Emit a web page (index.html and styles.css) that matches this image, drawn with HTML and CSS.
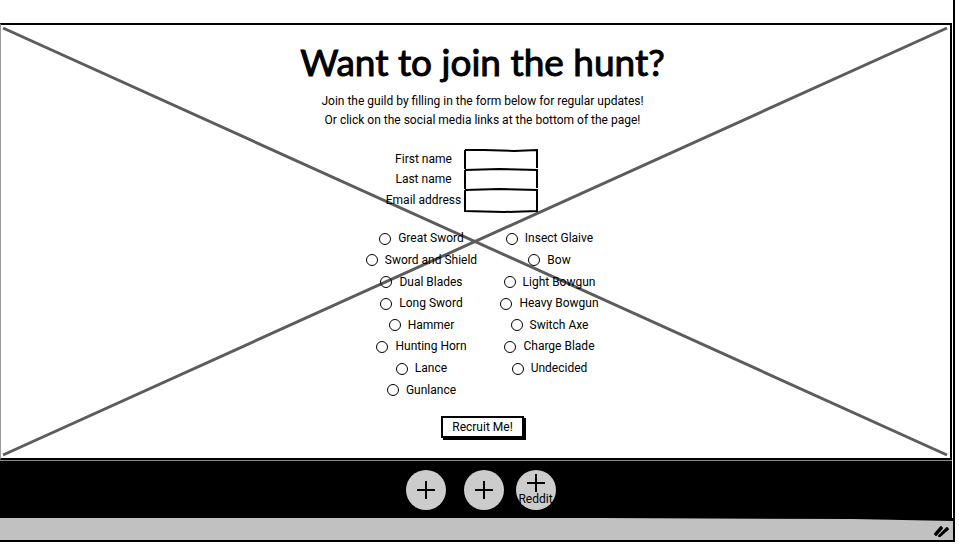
FILE: index.html
```html
<!DOCTYPE html>
<html lang="en">
<head>
<meta charset="utf-8">
<title>Want to join the hunt?</title>
<link rel="stylesheet" href="styles.css">
</head>
<body>
<div class="window">
  <main class="hero">
    <svg class="cross" viewBox="0 0 950 434" preserveAspectRatio="none" aria-hidden="true">
      <path d="M2 3 L947 431 M947 3 L2 431"/>
    </svg>
    <form class="signup">
      <h1>Want to join the hunt?</h1>
      <p>Join the guild by filling in the form below for regular updates!</p>
      <p>Or click on the social media links at the bottom of the page!</p>
      <div class="fields">
        <label for="first">First name</label><input id="first" type="text">
        <label for="last">Last name</label><input id="last" type="text">
        <label for="email">Email address</label><input id="email" type="email">
        <svg class="sketch" viewBox="0 0 74 64" aria-hidden="true">
          <path d="M1 1 L20 1 L50 2 L73 1 L73 19 M1 1 L1 20 M1 21 L35 20 L73 21 L73 39 M1 21 L1 40 M1 41 L35 40 L73 41 L73 62 L40 63 L1 62 L1 41"/>
        </svg>
      </div>
      <div class="weapons">
        <label><input type="radio" name="weapon">Great Sword</label>
        <label><input type="radio" name="weapon">Sword and Shield</label>
        <label><input type="radio" name="weapon">Dual Blades</label>
        <label><input type="radio" name="weapon">Long Sword</label>
        <label><input type="radio" name="weapon">Hammer</label>
        <label><input type="radio" name="weapon">Hunting Horn</label>
        <label><input type="radio" name="weapon">Lance</label>
        <label><input type="radio" name="weapon">Gunlance</label>
        <label><input type="radio" name="weapon">Insect Glaive</label>
        <label><input type="radio" name="weapon">Bow</label>
        <label><input type="radio" name="weapon">Light Bowgun</label>
        <label><input type="radio" name="weapon">Heavy Bowgun</label>
        <label><input type="radio" name="weapon">Switch Axe</label>
        <label><input type="radio" name="weapon">Charge Blade</label>
        <label><input type="radio" name="weapon">Undecided</label>
      </div>
      <button type="button">Recruit Me!</button>
    </form>
  </main>
  <footer class="social">
    <a href="#" aria-label="Social link"><svg viewBox="0 0 18 18"><path d="M9 0V18M0 9H18"/></svg></a>
    <a href="#" aria-label="Social link" class="spaced"><svg viewBox="0 0 18 18"><path d="M9 0V18M0 9H18"/></svg></a>
    <a href="#"><svg viewBox="0 0 18 18"><path d="M9 0V18M0 9H18"/></svg><span>Reddit</span></a>
  </footer>
  <div class="status">
    <svg class="edge" viewBox="0 0 950 4" preserveAspectRatio="none" aria-hidden="true"><path d="M600 0 H950 V3 L850 1 Z"/></svg>
    <svg class="grip" viewBox="0 0 16 14" aria-hidden="true"><path d="M2 10 L8 3 M3 11 L9 4 M6 12 L14 4 M7 12 L15 5"/></svg>
  </div>
</div>
</body>
</html>
```
FILE: styles.css
```css
* { box-sizing: border-box; }
body {
  margin: 0;
  background: #fff;
  color: #000;
  font: 12px/19px Roboto, "Open Sans", sans-serif;
}
.window {
  margin-right: 4px;
  padding-top: 23px;
  border-right: 2px solid #000;
  border-bottom: 2px solid #000;
}
.hero {
  position: relative;
  margin-right: 1px;
  padding: 15px 0 20px 14px;
  border: 2px solid #000;
  border-left: 1px solid #999;
}
.cross {
  position: absolute;
  inset: 0;
  width: 100%;
  height: 100%;
}
.cross path { fill: none; stroke: #5c5c5c; stroke-width: 3; }
.signup {
  position: relative;
  display: flex;
  flex-direction: column;
  align-items: center;
}
h1 {
  margin: 0 0 8px;
  font-family: Lato, sans-serif;
  font-size: 37px;
  line-height: 44px;
  font-weight: 400;
  -webkit-text-stroke: 1px #000;
}
p { margin: 0; }
.fields {
  position: relative;
  display: grid;
  grid-template-columns: 80px 74px;
  grid-template-rows: 20px 20px 23px;
  margin: 19px 44px 0 0;
  align-items: center;
}
.fields label { text-align: center; white-space: nowrap; }
.fields input {
  width: 100%;
  height: 100%;
  padding: 0 4px;
  border: 0;
  background: #fff;
  font: inherit;
}
.sketch {
  position: absolute;
  right: 0;
  top: 0;
  width: 74px;
  height: 64px;
  pointer-events: none;
  overflow: visible;
}
.sketch path { fill: none; stroke: #000; stroke-width: 2; }
.weapons {
  display: grid;
  grid-template-columns: repeat(2, 128px);
  grid-template-rows: repeat(8, 1fr);
  grid-auto-flow: column;
  height: 173px;
  margin: 16px 0 15px 6px;
}
.weapons label {
  display: flex;
  align-items: center;
  justify-content: center;
  gap: 7px;
}
.weapons input {
  appearance: none;
  width: 12px;
  height: 12px;
  margin: 0;
  border: 1px solid #000;
  border-radius: 50%;
}
.weapons input:checked { background: #000; }
button {
  height: 22px;
  padding: 0 9px;
  border: 2px solid #000;
  background: #fff;
  box-shadow: 2px 2px #000;
  color: #000;
  font: inherit;
}
.social {
  display: flex;
  justify-content: center;
  gap: 12px;
  margin-right: 1px;
  padding: 9px 0 8px 9px;
  border-top: 1px solid #888;
  background: #000;
}
.social a {
  display: flex;
  flex-direction: column;
  align-items: center;
  justify-content: center;
  width: 40px;
  height: 40px;
  border-radius: 50%;
  background: #ccc;
  color: #000;
  line-height: 14px;
  text-decoration: none;
}
.social .spaced { margin-left: 6px; }
.social svg { width: 18px; height: 18px; }
.social path { stroke: #000; stroke-width: 2; }
.status {
  position: relative;
  display: flex;
  justify-content: flex-end;
  align-items: center;
  height: 22px;
  padding: 4px 4px 0 0;
  background: #c1c1c1;
}
.edge {
  position: absolute;
  top: 0;
  left: 0;
  width: 100%;
  height: 4px;
}
.grip { width: 16px; height: 14px; }
.grip path { stroke: #000; stroke-width: 2; stroke-linecap: round; }
```
